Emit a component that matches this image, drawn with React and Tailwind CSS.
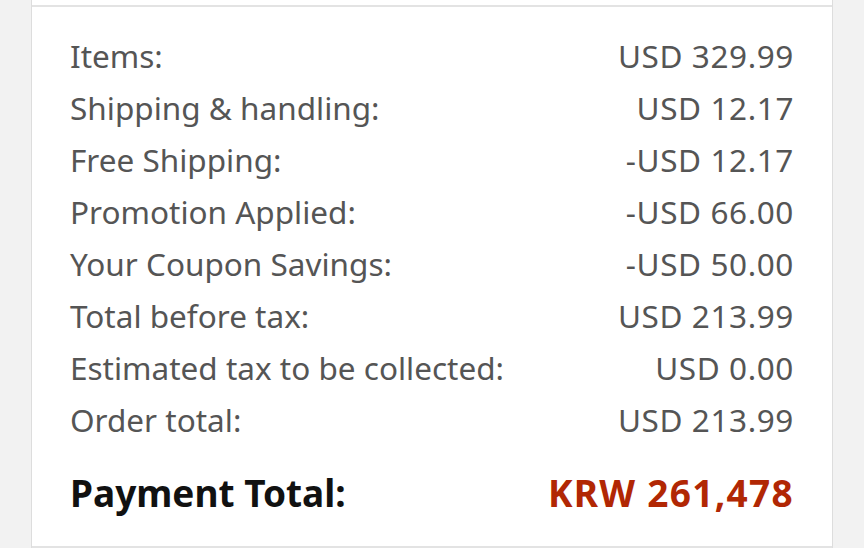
const rows = [
  ['Items:', 'USD 329.99'],
  ['Shipping & handling:', 'USD 12.17'],
  ['Free Shipping:', '-USD 12.17'],
  ['Promotion Applied:', '-USD 66.00'],
  ['Your Coupon Savings:', '-USD 50.00'],
  ['Total before tax:', 'USD 213.99'],
  ['Estimated tax to be collected:', 'USD 0.00'],
  ['Order total:', 'USD 213.99'],
];

export default function App() {
  return (
    <div className="h-[548px] w-[864px] overflow-hidden bg-[#f2f2f2] font-['Noto_Sans',sans-serif]">
      <div className="mx-[31px] border-x border-[#dddddd] bg-white">
        <div className="h-[5px]" />
        <div className="border-y-2 border-[#e3e3e3] px-[38px] pt-[23px] pb-[27px]">
          {rows.map(([label, value]) => (
            <div key={label} className="flex h-[52px] items-center justify-between text-[31.5px] text-[#555555]">
              <span>{label}</span>
              <span className="tracking-[0.6px]">{value}</span>
            </div>
          ))}
          <div className="mt-[21px] flex h-[52px] items-center justify-between text-[37px] font-bold">
            <span className="text-[#111111]">Payment Total:</span>
            <span className="tracking-[1.3px] text-[#b12704]">KRW 261,478</span>
          </div>
        </div>
      </div>
    </div>
  );
}
